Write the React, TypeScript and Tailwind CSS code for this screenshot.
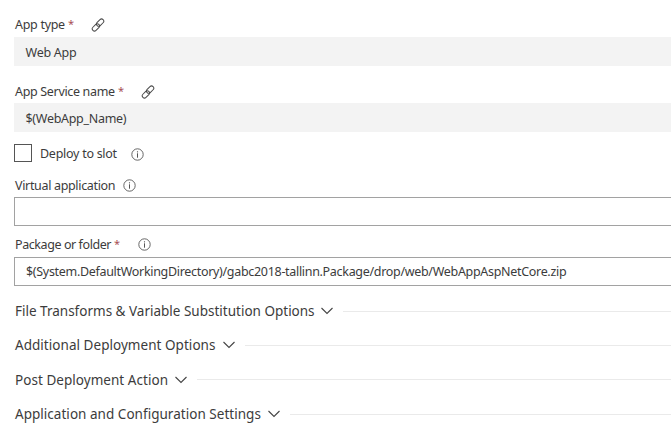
import React from "react";

function LinkIcon() {
  return (
    <svg width="14" height="14" viewBox="0 0 14 14" fill="none" stroke="#4a4a4a" strokeWidth="1" className="shrink-0">
      <g transform="rotate(-45 7 7)">
        <rect x="6" y="4.6" width="8.4" height="4.4" rx="2.2" />
        <rect x="-.4" y="5" width="8.4" height="4.4" rx="2.2" />
      </g>
    </svg>
  );
}

function InfoIcon() {
  return (
    <svg width="13" height="13" viewBox="0 0 13 13" fill="none" stroke="#555" className="shrink-0">
      <circle cx="6.5" cy="6.5" r="5.7" strokeWidth="0.9" />
      <path d="M6.5 5.3v4.4" strokeWidth="1" />
      <path d="M6.5 3.3v1.1" strokeWidth="1.1" />
    </svg>
  );
}

function Label({ text, className, required }: { text: string; className: string; required?: boolean }) {
  return (
    <span className="flex items-center whitespace-nowrap">
      <span className={className}>{text}</span>
      {required && <span className="ml-[3px] w-[6px] pb-[2px] text-[11px] leading-4 text-[#a85054]">*</span>}
    </span>
  );
}

function Section({ title, className }: { title: string; className: string }) {
  return (
    <div className="flex items-center pl-px">
      <span className={`whitespace-nowrap text-[13.5px] ${className}`}>{title}</span>
      <svg width="12" height="8" viewBox="0 0 12 8" fill="none" stroke="#444" className="ml-1.5 shrink-0">
        <path d="M.5 1 6 6.5 11.5 1" strokeWidth="1.1" />
      </svg>
      <div className="ml-[10px] h-px flex-1 bg-[#eaeaea]" />
    </div>
  );
}

export default function App() {
  return (
    <main className="h-[430px] w-[671px] overflow-hidden bg-white pl-3.5 font-['Noto_Sans',sans-serif] text-[12.5px] leading-[18px] text-[#3c3c3c]">
      <div className="flex h-[37px] items-center gap-[17px] pl-px pt-[12px]">
        <Label text="App type" className="w-[50px] tracking-[-0.3px]" required />
        <LinkIcon />
      </div>
      <div className="flex h-[29px] items-center bg-[#f3f3f3] pl-[11.5px] pt-[2px]">
        <span className="tracking-[-0.25px]">Web App</span>
      </div>
      <div className="flex h-[37px] items-center gap-[17px] pl-px pt-[14px]">
        <Label text="App Service name" className="w-[100px] tracking-[-0.33px]" required />
        <LinkIcon />
      </div>
      <div className="flex h-[29px] items-center bg-[#f3f3f3] pl-[11.5px] pt-[2px]">
        <span className="tracking-[-0.3px]">$(WebApp_Name)</span>
      </div>
      <div className="flex h-[42px] items-center">
        <div className="size-[18px] border border-[#555]" />
        <span className="ml-2 w-[91px] whitespace-nowrap pt-[2px] tracking-[-0.27px]">Deploy to slot</span>
        <div className="pt-[3px]">
          <InfoIcon />
        </div>
      </div>
      <div className="flex h-[23px] items-center pl-px">
        <span className="w-[108px] whitespace-nowrap tracking-[-0.33px]">Virtual application</span>
        <InfoIcon />
      </div>
      <div className="h-[29px] border border-r-0 border-[#a2a2a2]" />
      <div className="flex h-[31px] items-center gap-[18px] pl-px pt-[6px]">
        <Label text="Package or folder" className="w-[96px] tracking-[-0.42px]" required />
        <InfoIcon />
      </div>
      <div className="flex h-[29px] items-center border border-r-0 border-[#a2a2a2] pl-[11px]">
        <span className="tracking-[-0.31px]">$(System.DefaultWorkingDirectory)/gabc2018-tallinn.Package/drop/web/WebAppAspNetCore.zip</span>
      </div>
      <div className="grid grid-rows-[34px_34px_35px_34px] pt-[8px]">
        <Section title="File Transforms & Variable Substitution Options" className="w-[300px]" />
        <Section title="Additional Deployment Options" className="w-[202px] tracking-[0.04px]" />
        <Section title="Post Deployment Action" className="w-[154px] tracking-[0.04px]" />
        <Section title="Application and Configuration Settings" className="w-[247px] tracking-[0.03px]" />
      </div>
    </main>
  );
}
